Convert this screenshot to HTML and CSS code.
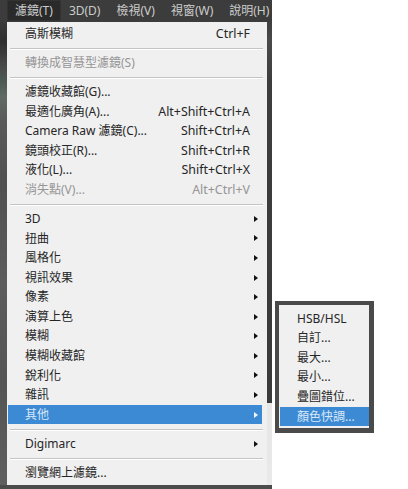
FILE: index.html
```html
<!DOCTYPE html>
<html lang="zh-Hant">
<head>
<meta charset="utf-8">
<title>濾鏡選單</title>
<link rel="stylesheet" href="styles.css">
</head>
<body>
<div class="screen">
  <div class="app">
    <div class="menubar">
      <span class="mb-item active">濾鏡(T)</span>
      <span class="mb-item">3D(D)</span>
      <span class="mb-item">檢視(V)</span>
      <span class="mb-item">視窗(W)</span>
      <span class="mb-item">說明(H)</span>
    </div>
    <div class="work">
      <div class="canvas-edge"></div>
      <div class="menu">
        <div class="row"><span class="label">高斯模糊</span><span class="key">Ctrl+F</span><span class="arrow-slot"></span></div>
        <div class="sep"></div>
        <div class="row disabled"><span class="label">轉換成智慧型濾鏡(S)</span><span class="key"></span><span class="arrow-slot"></span></div>
        <div class="sep"></div>
        <div class="row"><span class="label">濾鏡收藏館(G)...</span><span class="key"></span><span class="arrow-slot"></span></div>
        <div class="row"><span class="label">最適化廣角(A)...</span><span class="key">Alt+Shift+Ctrl+A</span><span class="arrow-slot"></span></div>
        <div class="row"><span class="label">Camera Raw 濾鏡(C)...</span><span class="key">Shift+Ctrl+A</span><span class="arrow-slot"></span></div>
        <div class="row"><span class="label">鏡頭校正(R)...</span><span class="key">Shift+Ctrl+R</span><span class="arrow-slot"></span></div>
        <div class="row"><span class="label">液化(L)...</span><span class="key">Shift+Ctrl+X</span><span class="arrow-slot"></span></div>
        <div class="row disabled"><span class="label">消失點(V)...</span><span class="key">Alt+Ctrl+V</span><span class="arrow-slot"></span></div>
        <div class="sep"></div>
        <div class="row"><span class="label">3D</span><span class="key"></span><span class="arrow-slot"><i class="arrow"></i></span></div>
        <div class="row"><span class="label">扭曲</span><span class="key"></span><span class="arrow-slot"><i class="arrow"></i></span></div>
        <div class="row"><span class="label">風格化</span><span class="key"></span><span class="arrow-slot"><i class="arrow"></i></span></div>
        <div class="row"><span class="label">視訊效果</span><span class="key"></span><span class="arrow-slot"><i class="arrow"></i></span></div>
        <div class="row"><span class="label">像素</span><span class="key"></span><span class="arrow-slot"><i class="arrow"></i></span></div>
        <div class="row"><span class="label">演算上色</span><span class="key"></span><span class="arrow-slot"><i class="arrow"></i></span></div>
        <div class="row"><span class="label">模糊</span><span class="key"></span><span class="arrow-slot"><i class="arrow"></i></span></div>
        <div class="row"><span class="label">模糊收藏館</span><span class="key"></span><span class="arrow-slot"><i class="arrow"></i></span></div>
        <div class="row"><span class="label">銳利化</span><span class="key"></span><span class="arrow-slot"><i class="arrow"></i></span></div>
        <div class="row"><span class="label">雜訊</span><span class="key"></span><span class="arrow-slot"><i class="arrow"></i></span></div>
        <div class="row selected"><span class="label">其他</span><span class="key"></span><span class="arrow-slot"><i class="arrow"></i></span></div>
        <div class="sep"></div>
        <div class="row"><span class="label">Digimarc</span><span class="key"></span><span class="arrow-slot"><i class="arrow"></i></span></div>
        <div class="sep"></div>
        <div class="row"><span class="label">瀏覽網上濾鏡...</span><span class="key"></span><span class="arrow-slot"></span></div>
      </div>
      <div class="menu-edge"></div>
    </div>
    <div class="bottom-edge"></div>
  </div>
  <div class="submenu">
    <div class="sub-row">HSB/HSL</div>
    <div class="sub-row">自訂...</div>
    <div class="sub-row">最大...</div>
    <div class="sub-row">最小...</div>
    <div class="sub-row">疊圖錯位...</div>
    <div class="sub-row selected">顏色快調...</div>
  </div>
</div>
</body>
</html>
```

FILE: styles.css
```css
html, body {
  margin: 0;
  padding: 0;
  background: #ffffff;
}

body {
  font-family: "Noto Sans", "Noto Sans CJK TC", sans-serif;
  font-size: 12px;
  color: #262626;
}

.screen {
  position: relative;
  width: 408px;
  height: 489px;
  overflow: hidden;
  background: #ffffff;
}

.app {
  width: 272px;
  display: flex;
  flex-direction: column;
}

/* ---- menu bar ---- */
.menubar {
  height: 22px;
  background: #3c3c3c;
  display: flex;
  align-items: stretch;
  padding-left: 7px;
}

.mb-item {
  padding: 0 8px;
  line-height: 22px;
  color: #cccccc;
  white-space: nowrap;
}

.mb-item.active {
  background: #2a2a2a;
  box-shadow: inset 0 0 0 1px #333333;
  height: 21px;
  line-height: 21px;
}

/* ---- work area below bar ---- */
.work {
  display: flex;
  height: 463px;
}

.canvas-edge {
  width: 7px;
  background: linear-gradient(to bottom,
    #3a3a3a 0px, #2f2f2f 20px, #454545 40px,
    #4d5b55 60px, #5f6a63 75px, #595959 100px,
    #505050 160px, #5c5c5c 260px, #545454 360px,
    #5f5f5f 463px);
}

.menu {
  width: 260px;
  background: #f0f0f0;
  padding: 2px 0 2.4px;
  box-sizing: border-box;
  display: flex;
  flex-direction: column;
}

.menu-edge {
  width: 5px;
  background: linear-gradient(to bottom,
    #3f3f3f 0px, #4a4a4a 20px, #3d3d3d 60px, #3a3a3a 381px,
    #e6e6e6 381px, #e9e9e9 463px);
}

.bottom-edge {
  height: 4px;
  background: #4b4b4b;
}

.row {
  height: 19.6px;
  line-height: 19.6px;
  margin: 0 5px 0 1px;
  padding-left: 17px;
  display: flex;
  align-items: center;
  white-space: nowrap;
}

.row .label {
  flex: 1;
}

.row .key {
  font-size: 12.4px;
}

.arrow-slot {
  width: 12px;
  height: 19.6px;
  display: flex;
  align-items: center;
  justify-content: center;
}

.arrow {
  display: block;
  width: 0;
  height: 0;
  border-top: 3.5px solid transparent;
  border-bottom: 3.5px solid transparent;
  border-left: 4px solid #111111;
}

.row.disabled {
  color: #959595;
}

.row.selected {
  background: #3d8ad4;
  color: #d8e8f8;
}

.row.selected .arrow {
  border-left-color: #eef5fc;
}

.sep {
  height: 9.4px;
  display: flex;
  align-items: center;
  margin: 0 4px 0 3px;
}

.sep::after {
  content: "";
  display: block;
  width: 100%;
  height: 1px;
  background: #c4c4c4;
  box-shadow: 0 1px 0 #ffffff;
}

/* ---- flyout submenu (overlays content) ---- */
.submenu {
  position: absolute;
  left: 275px;
  top: 301px;
  width: 99px;
  box-sizing: border-box;
  border-style: solid;
  border-color: #4a4a4a;
  border-width: 4px 5px 5px 4px;
  background: #f0f0f0;
  padding: 3.6px 0 1.6px 1px;
  display: flex;
  flex-direction: column;
}

.sub-row {
  height: 19.6px;
  line-height: 19.6px;
  padding-left: 17px;
  white-space: nowrap;
}

.sub-row.selected {
  background: #3d8ad4;
  color: #d8e8f8;
}
```
